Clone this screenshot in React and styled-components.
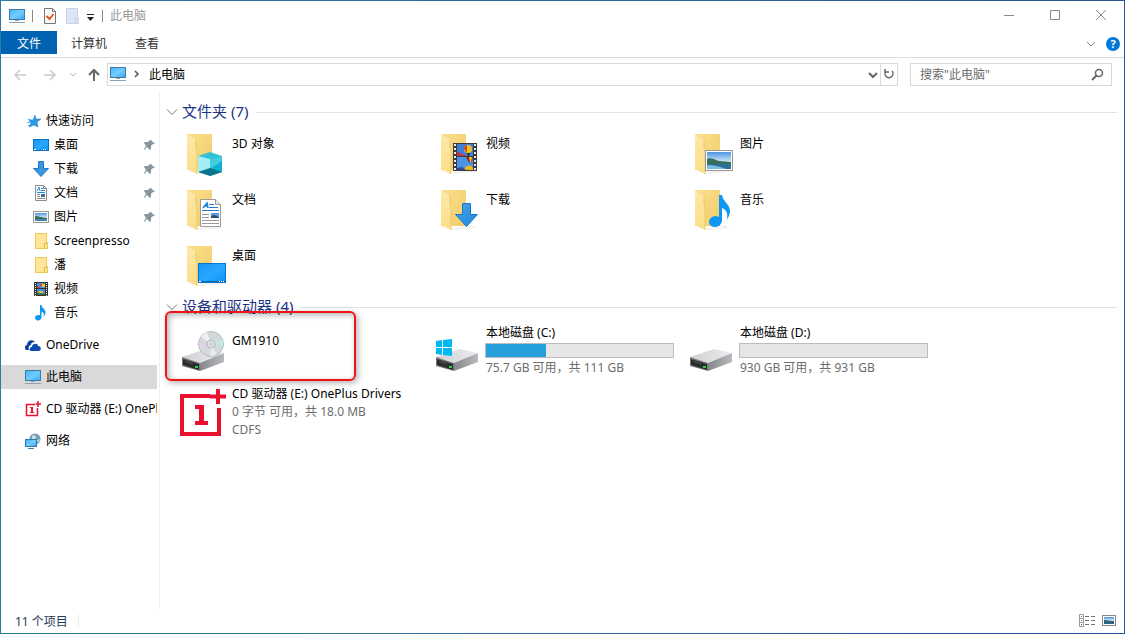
import React from "react";
import styled, { createGlobalStyle } from "styled-components";

const folders = [
  { name: "3D 对象", art: "cube" },
  { name: "视频", art: "video" },
  { name: "图片", art: "picture" },
  { name: "文档", art: "document" },
  { name: "下载", art: "download" },
  { name: "音乐", art: "music" },
  { name: "桌面", art: "desktop" },
];

const drives = [
  { name: "GM1910", art: "disc", marked: true },
  { name: "本地磁盘 (C:)", art: "system", used: 32, info: ["75.7 GB 可用，共 111 GB"] },
  { name: "本地磁盘 (D:)", art: "disk", used: 0, info: ["930 GB 可用，共 931 GB"] },
  { name: "CD 驱动器 (E:) OnePlus Drivers", art: "oneplus", info: ["0 字节 可用，共 18.0 MB", "CDFS"] },
];

const quickAccess = [
  { name: "桌面", icon: "desktop", pinned: true },
  { name: "下载", icon: "download", pinned: true },
  { name: "文档", icon: "document", pinned: true },
  { name: "图片", icon: "picture", pinned: true },
  { name: "Screenpresso", icon: "folder" },
  { name: "潘", icon: "folder" },
  { name: "视频", icon: "video" },
  { name: "音乐", icon: "music" },
];

function Gradients() {
  return (
    <HiddenSvg aria-hidden="true">
      <defs>
        <linearGradient id="screen" x1="0" y1="0" x2="1" y2="1">
          <stop offset="0" stopColor="#3fb4f7" />
          <stop offset="0.5" stopColor="#74ccff" />
          <stop offset="1" stopColor="#35a8f3" />
        </linearGradient>
        <linearGradient id="desk" x1="0" y1="0" x2="1" y2="1">
          <stop offset="0" stopColor="#1197f5" />
          <stop offset="0.5" stopColor="#2aa7ff" />
          <stop offset="1" stopColor="#0a94f5" />
        </linearGradient>
        <linearGradient id="back" x1="0" y1="0" x2="1" y2="1">
          <stop offset="0" stopColor="#fbdf8b" />
          <stop offset="1" stopColor="#f0cd6c" />
        </linearGradient>
        <linearGradient id="flap" x1="0" y1="0" x2="0" y2="1">
          <stop offset="0" stopColor="#fde9ab" />
          <stop offset="1" stopColor="#fbdd86" />
        </linearGradient>
        <linearGradient id="metal" x1="0" y1="0" x2="1" y2="0">
          <stop offset="0" stopColor="#d0d1d4" />
          <stop offset="1" stopColor="#ececee" />
        </linearGradient>
        <linearGradient id="side" x1="0" y1="0" x2="1" y2="0">
          <stop offset="0" stopColor="#85868a" />
          <stop offset="1" stopColor="#b9babd" />
        </linearGradient>
        <linearGradient id="sky" x1="0" y1="0" x2="0" y2="1">
          <stop offset="0" stopColor="#4c94e0" />
          <stop offset="1" stopColor="#e4f3fc" />
        </linearGradient>
        <linearGradient id="arrow" x1="0" y1="0" x2="1" y2="1">
          <stop offset="0" stopColor="#4aa3e8" />
          <stop offset="1" stopColor="#1f86dc" />
        </linearGradient>
      </defs>
    </HiddenSvg>
  );
}

function Cube() {
  return (
    <g>
      <path d="M31 23l12 4-12 4-12-4z" fill="#35bfd2" />
      <path d="M19 27l12 3v17l-12-4z" fill="#a4edf4" />
      <path d="M43 27l-12 3v17l12-4z" fill="#0cb0d2" />
      <path d="M31 30l12-3v5l-12 8z" fill="#3fcbe0" />
      <path d="M19 43l12-4 12 4-12 4z" fill="#08778c" />
    </g>
  );
}

function Balloons() {
  return (
    <g>
      <rect x="20" y="14" width="24" height="28" fill="#3b3b3b" />
      <rect x="24" y="15" width="16" height="12" fill="#3f7ed6" />
      <rect x="24" y="28" width="16" height="13" fill="#4a93e8" />
      <path d="M24 22l5 3 5 2H24z" fill="#c8324a" />
      <ellipse cx="35" cy="20" rx="4" ry="4" fill="#f0c419" />
      <path d="M31 20a4 4 0 0 1 3-4v8z" fill="#d6402f" />
      <path d="M34 24h3l-1 3h-1z" fill="#3a2b16" />
      <path d="M33 28h7l-1 4-2 2-2-2z" fill="#8b2636" />
      <path d="M36 28h3l-1 5h-1z" fill="#f3c623" />
      <path d="M31 41c1-5 7-6 9-2v2z" fill="#eeb91b" />
      <path d="M24 39l5-1 4 3h-9z" fill="#2d4b93" />
      <path d="M22 15v27M42 15v27" stroke="#eee" strokeWidth="2" strokeDasharray="2 2" />
    </g>
  );
}

function Landscape() {
  return (
    <g>
      <rect x="18.5" y="21.5" width="27" height="20" fill="#fff" stroke="#999" />
      <rect x="20" y="23" width="24" height="11" fill="url(#sky)" />
      <path d="M20 30c4-2 8 1 12 2l12 1v3H20z" fill="#37705a" />
      <path d="M20 35h24v5H20z" fill="#2d6f9c" />
      <path d="M20 36c7 0 14 2 19 4H20z" fill="#7ebfdd" />
    </g>
  );
}

function Page() {
  return (
    <g>
      <path d="M21.5 14.5h15l5 5v22h-20z" fill="#fff" stroke="#9a9a9a" />
      <path d="M36.5 14.5v5h5" fill="#e8e8e8" stroke="#9a9a9a" />
      <path d="M24 23l4-5 1 5M26 21h3" stroke="#1b7fd4" strokeWidth="1.5" fill="none" />
      <path d="M30 19.5h5M30 22.5h9M23 25.5h17" stroke="#1b7fd4" />
      <path d="M23 29.5h7M23 32.5h7M23 35.5h17M23 38.5h17" stroke="#9a9a9a" />
      <rect x="32" y="28" width="8" height="5" fill="#5b9bd8" />
      <path d="M32 33v-2l3-1 5 2v1z" fill="#24506e" />
    </g>
  );
}

function Screen() {
  return (
    <g>
      <rect x="19.5" y="22.5" width="27" height="19" fill="url(#desk)" stroke="#0b74cc" />
      <path d="M20 40.5h26" stroke="#0868b5" />
      <path d="M20 40.5h2M40 40.5h1M42 40.5h1M44 40.5h1" stroke="#fff" />
    </g>
  );
}

function Note() {
  return (
    <path
      d="M32 10h3c1 7 8 9 8 16 0 4-2 6-3 9 1-6 0-10-5-12v12c0 4-3 7-7 7-3 0-6-2-6-5s3-6 7-6l3 1z"
      fill="#0c97f3"
    />
  );
}

const folderArt = {
  cube: <Cube />,
  video: <Balloons />,
  picture: <Landscape />,
  document: <Page />,
  download: <path d="M29.5 18.5h8v11h7L33.5 41.5 22.5 29.5h7z" fill="url(#arrow)" stroke="#1b77c4" />,
  music: <Note />,
  desktop: <Screen />,
};

function FolderIcon({ art }) {
  return (
    <svg width="48" height="48" aria-hidden="true">
      <path d="M17 44l5 1 22-2-6-3z" fill="#f2f2f2" />
      <path d="M8 5h25v36H8z" fill="url(#back)" />
      <path d="M8 5l9 6v9l1 1v24L8 40z" fill="url(#flap)" />
      <path d="M17 11v9l1 1v24" stroke="#ecc867" fill="none" />
      {folderArt[art]}
    </svg>
  );
}

function DriveBody() {
  return (
    <g>
      <path d="M3 30l24-8 18 4-24 10z" fill="url(#metal)" />
      <path d="M21 36l24-10v9L21 44z" fill="url(#side)" />
      <path d="M3 30l18 6v8L3 39z" fill="#77787a" />
      <path d="M4 32l16 5v6L4 38z" fill="#2b2c2e" />
      <path d="M6 34l8 3" stroke="#565759" />
      <path d="M16 39h3v2h-3z" fill="#27d43c" />
    </g>
  );
}

function DriveIcon({ art }) {
  if (art === "oneplus") {
    return (
      <svg width="48" height="48" aria-hidden="true">
        <path d="M31 7H3v38h37V19" stroke="#eb1230" strokeWidth="4" fill="none" />
        <path d="M39 0v15M31 7.5h16" stroke="#eb1230" strokeWidth="4" />
        <path d="M16 16h9v16h4v4H16v-4h4V20h-4z" fill="#eb1230" />
      </svg>
    );
  }
  return (
    <svg width="48" height="48" aria-hidden="true">
      <DriveBody />
      {art === "disc" && (
        <g>
          <circle cx="32" cy="17" r="12.5" fill="#d3d8da" stroke="#b6babd" />
          <path d="M32 17L22 10a12 12 0 0 1 6-5z" fill="#eef0f1" />
          <path d="M32 17l12-4a12 12 0 0 1 0 6z" fill="#c3ecdd" />
          <path d="M32 17l-12-2a12 12 0 0 0 1 6z" fill="#e3d3ea" />
          <path d="M32 17l6 10a12 12 0 0 1-7 2z" fill="#e9ebec" />
          <circle cx="32" cy="17" r="4" fill="#e9ecee" stroke="#aeb3b6" />
          <circle cx="32" cy="17" r="1.5" fill="#fff" stroke="#aeb3b6" />
        </g>
      )}
      {art === "system" && (
        <path
          d="M3 14l6-1v7H3zM10 13l9-1v8h-9zM3 21h6v7l-6-1zM10 21h9v8l-9-1z"
          fill="#00b9f1"
        />
      )}
    </svg>
  );
}

const smallArt = {
  star: (
    <g>
      <path d="M10 2l1 4h5l-4 3 1 5-4-2-5 2 2-4-2-3h4z" fill="#2b9be6" stroke="#1977c2" strokeWidth="0.5" />
      <path d="M3 6.5h3M2 9.5h4M3 12.5h2" stroke="#53b5f2" />
    </g>
  ),
  desktop: (
    <g>
      <rect x="0.5" y="2.5" width="15" height="11" fill="url(#desk)" stroke="#0b6fc0" />
      <path d="M1 12.5h2M10 12.5h1M12 12.5h1" stroke="#fff" />
    </g>
  ),
  download: <path d="M5.5 0.5h5v7h5L8 15.5 0.5 7.5h5z" fill="#3b96e2" stroke="#2277c6" />,
  document: (
    <g>
      <path d="M2.5 0.5h8l3 3v12h-11z" fill="#fff" stroke="#8c8c8c" />
      <path d="M10.5 0.5v3h3" fill="none" stroke="#8c8c8c" />
      <path d="M4 6l2-4 1 4M8 3.5h2M8 5.5h4M4 7.5h8" stroke="#2289d8" fill="none" />
      <path d="M4 9.5h3M4 11.5h3M4 13.5h8" stroke="#8c8c8c" />
      <rect x="8" y="9" width="4" height="3" fill="#3a6f9c" />
    </g>
  ),
  picture: (
    <g>
      <rect x="0.5" y="2.5" width="15" height="11" fill="#fff" stroke="#999" />
      <rect x="2" y="4" width="12" height="5" fill="url(#sky)" />
      <path d="M2 7c3 0 5 1 12 2v1H2z" fill="#37705a" />
      <path d="M2 10h12v2H2z" fill="#4587ac" />
    </g>
  ),
  folder: (
    <g>
      <path d="M2.5 0.5h11v9h1v6h-12z" fill="#ffe596" stroke="#eac65d" />
      <path d="M11.5 15.5v-5h2v-2" stroke="#e0b94a" fill="none" />
    </g>
  ),
  video: (
    <g>
      <rect x="1" y="1" width="14" height="14" fill="#333" />
      <path d="M4 2h8v5H4zM4 8h8v6H4z" fill="#4b8de0" />
      <path d="M4 5l4 2H4zM7 3h3v2H7z" fill="#d5432c" />
      <path d="M9 3h3v3H9zM6 10h4v2H6z" fill="#f3c422" />
      <path d="M4 12h4l4 1v1H4z" fill="#3c7038" />
      <path d="M2.5 2v13M13.5 2v13" stroke="#eee" strokeDasharray="1 1" />
    </g>
  ),
  music: (
    <path
      d="M7 0h1.5c0 3 4 4 4 7.5 0 2-1 3-2 4.5 1-3 0-5-2-5.5V12c0 2-1.5 3.5-3.5 3.5S2 14 2 12.500 3.500 10 5.500 10H7z"
      fill="#0c97f3"
    />
  ),
  cloud: (
    <g>
      <path d="M1 13c-2-2-1-5 1-5 0-4 4-6 7-4l1 1c-3 0-4 1-4 3-2 0-3 3-2 5z" fill="#0a3f9c" />
      <path d="M6 14c-2 0-2-4 1-4 0-4 6-4 6-1 3 0 4 4 1 5z" fill="#0c4cb0" />
    </g>
  ),
  computer: (
    <g>
      <rect x="0.5" y="1.5" width="15" height="10" fill="url(#screen)" stroke="#3f7ca5" />
      <path d="M6 12.5h4" stroke="#8ba3b3" />
      <path d="M0 14.5h16" stroke="#8ba3b3" />
    </g>
  ),
  oneplus: (
    <g>
      <path d="M10 3.5H1.500v11h11V7" stroke="#eb1230" strokeWidth="1.5" fill="none" />
      <path d="M13 0v6M10.500 3h5.500" stroke="#eb1230" strokeWidth="1.5" />
      <path d="M5 6h3v5h1v1H5v-1h1V7H5z" fill="#eb1230" />
    </g>
  ),
  network: (
    <g>
      <circle cx="10" cy="6" r="5.5" fill="#6f9fb8" />
      <path d="M7 3c2-2 5 0 4 2s-3 1-4 3zM12 7l3-1-2 4z" fill="#c9dfe8" />
      <rect x="0.5" y="6.5" width="11" height="7" fill="url(#screen)" stroke="#2f78ab" />
      <path d="M3 15.5h6" stroke="#3f7ca5" />
    </g>
  ),
  pin: <path d="M10 3l4 4-2 0-2 2 0 3-1 1-3-3-3 3 0-1 2-3-2-3 1-1 3 0 2-2z" fill="#8a959d" />,
};

function SmallIcon({ name }) {
  return (
    <svg width="16" height="16" aria-hidden="true">
      {smallArt[name]}
    </svg>
  );
}

function Line({ d, w = 16, h = 16, color = "#777", weight = 1 }) {
  return (
    <svg width={w} height={h} fill="none" stroke={color} strokeWidth={weight} aria-hidden="true">
      <path d={d} />
    </svg>
  );
}

function Group({ title, children }) {
  return (
    <section>
      <GroupHeader>
        <GroupButton>
          <Line d="M1 4.5l5 5 5-5" w="12" h="12" />
          {title}
        </GroupButton>
        <Rule />
      </GroupHeader>
      {children}
    </section>
  );
}

function App() {
  return (
    <Frame>
      <GlobalStyle />
      <Gradients />
      <Window>
        <TitleBar>
          <SmallIcon name="computer" />
          <Divider />
          <QuickButton aria-label="属性">
            <svg width="16" height="16">
              <path d="M0.5 0.5h8l3 3v12h-11z" fill="#fafafa" stroke="#777" />
              <path d="M8.5 0.5v3h3" fill="none" stroke="#777" />
              <path d="M2.5 8l3 3 4-5" stroke="#e8541e" strokeWidth="2" fill="none" />
            </svg>
          </QuickButton>
          <QuickButton aria-label="新建文件夹">
            <svg width="16" height="16">
              <path d="M2.5 0.5h11v10h1v5h-12z" fill="#dbe5f5" stroke="#c5d2e8" />
              <path d="M11.5 15.5v-5h2" fill="none" stroke="#c5d2e8" />
            </svg>
          </QuickButton>
          <QuickButton aria-label="自定义快速访问工具栏">
            <svg width="11" height="16">
              <path d="M3 6h7v1H3zM3 9h7l-3.5 4z" fill="#222" />
            </svg>
          </QuickButton>
          <Divider />
          <Caption>此电脑</Caption>
          <WindowButton aria-label="最小化">
            <Line d="M1 7.5h10" w="12" color="#888" />
          </WindowButton>
          <WindowButton aria-label="最大化">
            <Line d="M1.5 2.5h9v9h-9z" w="12" color="#888" />
          </WindowButton>
          <WindowButton aria-label="关闭">
            <Line d="M1 2l10 10M11 2L1 12" w="12" color="#888" />
          </WindowButton>
        </TitleBar>

        <Ribbon>
          <Tab $file>文件</Tab>
          <Tab>计算机</Tab>
          <Tab>查看</Tab>
          <RibbonTools>
            <PlainButton aria-label="展开功能区">
              <Line d="M1 4l4 4 4-4" w="10" h="12" color="#888" />
            </PlainButton>
            <Help aria-label="帮助">?</Help>
          </RibbonTools>
        </Ribbon>

        <NavRow>
          <NavButton aria-label="后退">
            <Line d="M14 9H3M8 4L3 9l5 5" color="#ccc" weight="1.5" />
          </NavButton>
          <NavButton aria-label="前进">
            <Line d="M2 9h11M8 4l5 5-5 5" color="#ccc" weight="1.5" />
          </NavButton>
          <NavButton aria-label="最近浏览的位置" $narrow>
            <Line d="M1 7l3 3 3-3" w="8" color="#bbb" />
          </NavButton>
          <NavButton aria-label="上移" $up>
            <Line d="M8 15V4M3 9l5-5 5 5" color="#666" weight="2" />
          </NavButton>
          <AddressBox>
            <SmallIcon name="computer" />
            <PlainButton aria-label="路径">
              <Line d="M2 5l3 3-3 3" w="8" color="#555" weight="1.5" />
            </PlainButton>
            <Crumb href="#computer">此电脑</Crumb>
            <PlainButton aria-label="以前的位置">
              <Line d="M5 7l4 4 4-4" color="#666" weight="2" />
            </PlainButton>
            <Refresh aria-label="刷新">
              <Line d="M3 3v3h4M10 5a4 4 0 1 1-6 0L3 6" w="14" color="#666" weight="1.5" />
            </Refresh>
          </AddressBox>
          <SearchBox>
            <SearchInput type="text" aria-label="搜索" placeholder={'搜索"此电脑"'} />
            <svg width="16" height="16" fill="none" stroke="#666" strokeWidth="1.5" aria-hidden="true">
              <circle cx="10" cy="7" r="3.5" />
              <path d="M7.5 9.5L3 14" strokeWidth="2" />
            </svg>
          </SearchBox>
        </NavRow>

        <Body>
          <Sidebar>
            <SideItem href="#quick">
              <SmallIcon name="star" />
              <SideName>快速访问</SideName>
            </SideItem>
            {quickAccess.map((item) => (
              <SideItem key={item.name} href={"#" + item.icon} $child>
                <SmallIcon name={item.icon} />
                <SideName>{item.name}</SideName>
                {item.pinned && <SmallIcon name="pin" />}
              </SideItem>
            ))}
            <SideItem href="#onedrive" $apart>
              <SmallIcon name="cloud" />
              <SideName>OneDrive</SideName>
            </SideItem>
            <SideItem href="#computer" $apart $active>
              <SmallIcon name="computer" />
              <SideName>此电脑</SideName>
            </SideItem>
            <SideItem href="#cd" $apart>
              <SmallIcon name="oneplus" />
              <SideName>CD 驱动器 (E:) OnePlus Drivers</SideName>
            </SideItem>
            <SideItem href="#network" $apart>
              <SmallIcon name="network" />
              <SideName>网络</SideName>
            </SideItem>
          </Sidebar>

          <Main>
            <Group title="文件夹 (7)">
              <Tiles>
                {folders.map((f) => (
                  <Tile key={f.name} href={"#" + f.art}>
                    <FolderIcon art={f.art} />
                    <TileText>
                      <TileLine>{f.name}</TileLine>
                    </TileText>
                  </Tile>
                ))}
              </Tiles>
            </Group>
            <Group title="设备和驱动器 (4)">
              <Tiles>
                {drives.map((d) => (
                  <Tile key={d.name} href={"#" + d.art} $tall>
                    <DriveIcon art={d.art} />
                    <TileText $tall>
                      <TileLine>{d.name}</TileLine>
                      {d.used !== undefined && (
                        <Usage>
                          <UsageFill style={{ width: d.used + "%" }} />
                        </Usage>
                      )}
                      {d.info?.map((line) => (
                        <TileLine key={line} $dim>
                          {line}
                        </TileLine>
                      ))}
                    </TileText>
                    {d.marked && <Highlight />}
                  </Tile>
                ))}
              </Tiles>
            </Group>
          </Main>
        </Body>

        <StatusBar>
          <Count>11 个项目</Count>
          <ViewButtons>
            <PlainButton aria-label="详细信息">
              <svg width="16" height="16">
                <path d="M0.5 1.5h4v4h-4zM0.5 5.5h4v4h-4zM0.5 9.5h4v4h-4z" fill="#fff" stroke="#999" />
                <path d="M6 3.5h4M12 3.5h4M6 7.5h4M12 7.5h4M6 11.5h4M12 11.5h4" stroke="#777" />
                <path d="M2 3h1v1H2z" fill="#555" />
                <path d="M2 7h1v1H2z" fill="#2a7ad0" />
                <path d="M2 11h1v1H2z" fill="#d02a2a" />
              </svg>
            </PlainButton>
            <PlainButton aria-label="大缩略图">
              <svg width="14" height="16">
                <rect x="0.5" y="2.5" width="13" height="10" fill="#fff" stroke="#888" />
                <path d="M2 4h10v4H2z" fill="url(#sky)" />
                <path d="M2 7c3 0 5 1 10 1v3H2z" fill="#2d6480" />
              </svg>
            </PlainButton>
          </ViewButtons>
        </StatusBar>
      </Window>
    </Frame>
  );
}

export default App;

const GlobalStyle = createGlobalStyle`
  * {
    box-sizing: border-box;
  }
  body {
    margin: 0;
    font: 12px/18px "Noto Sans", "Noto Sans CJK SC", sans-serif;
    color: #000;
  }
  button, input {
    font: inherit;
    color: inherit;
    border: 0;
    padding: 0;
    background: none;
  }
  a {
    color: inherit;
    text-decoration: none;
  }
  svg {
    display: block;
    flex: none;
  }
`;

const HiddenSvg = styled.svg`
  position: absolute;
  width: 0;
  height: 0;
`;

const Frame = styled.div`
  min-height: 100vh;
  display: flex;
  padding: 1px;
  background: linear-gradient(to right, #2b7ba5, #2a5596);
`;

const Window = styled.div`
  flex: 1;
  min-width: 0;
  display: flex;
  flex-direction: column;
  background: #fff;
`;

const TitleBar = styled.header`
  display: flex;
  align-items: center;
  height: 30px;
  padding-left: 8px;
`;

const Divider = styled.span`
  width: 1px;
  height: 12px;
  margin: 0 7px;
  background: #888;
`;

const QuickButton = styled.button`
  display: flex;
  margin-left: 4px;
`;

const Caption = styled.span`
  flex: 1;
  color: #999;
`;

const WindowButton = styled.button`
  width: 46px;
  height: 30px;
  display: flex;
  align-items: center;
  justify-content: center;
`;

const Ribbon = styled.div`
  display: flex;
  height: 27px;
  border-bottom: 1px solid #dadbdc;
`;

const Tab = styled.button`
  height: 23px;
  padding: 2px ${({ $file }) => ($file ? "16px" : "14px")} 0;
  color: ${({ $file }) => ($file ? "#fff" : "#333")};
  background: ${({ $file }) => ($file ? "#0063b1" : "transparent")};
`;

const RibbonTools = styled.div`
  display: flex;
  align-items: center;
  gap: 10px;
  margin-left: auto;
  padding-right: 4px;
`;

const PlainButton = styled.button`
  display: flex;
`;

const Help = styled.button`
  width: 14px;
  height: 14px;
  border-radius: 50%;
  background: #0078d7;
  color: #fff;
  font-weight: bold;
  font-size: 11px;
  line-height: 14px;
`;

const NavRow = styled.div`
  display: flex;
  align-items: center;
  height: 34px;
  padding: 0 12px 2px 4px;
`;

const NavButton = styled.button`
  display: flex;
  justify-content: center;
  width: ${({ $narrow, $up }) => ($narrow ? "16px" : $up ? "26px" : "30px")};
`;

const AddressBox = styled.div`
  flex: 1;
  display: flex;
  align-items: center;
  height: 23px;
  border: 1px solid #d9d9d9;
  padding-left: 2px;
  gap: 7px;
`;

const Crumb = styled.a`
  flex: 1;
  padding: 1px 0 0 1px;
`;

const Refresh = styled.button`
  display: flex;
  align-items: center;
  justify-content: center;
  width: 17px;
  height: 21px;
  margin-left: -7px;
  border-left: 1px solid #d9d9d9;
`;

const SearchBox = styled.label`
  display: flex;
  align-items: center;
  width: 202px;
  height: 23px;
  margin-left: 12px;
  padding: 0 6px 0 9px;
  border: 1px solid #d9d9d9;
`;

const SearchInput = styled.input`
  flex: 1;
  min-width: 0;
  padding-top: 2px;
  outline: 0;
  &::placeholder {
    color: #6d6d6d;
    opacity: 1;
  }
`;

const Body = styled.div`
  flex: 1;
  display: flex;
`;

const Sidebar = styled.nav`
  width: 159px;
  flex: none;
  padding: 17px 2px 0 0;
  border-right: 1px solid #f0f0f0;
`;

const SideItem = styled.a`
  display: flex;
  align-items: center;
  gap: 5px;
  height: 24px;
  margin-top: ${({ $apart }) => ($apart ? "8px" : "0")};
  padding-left: ${({ $child }) => ($child ? "32px" : "24px")};
  background: ${({ $active }) => ($active ? "#d9d9d9" : "transparent")};
`;

const SideName = styled.span`
  flex: 1;
  min-width: 0;
  overflow: hidden;
  white-space: nowrap;
`;

const Main = styled.main`
  flex: 1;
  padding: 6px 7px 0 6px;
`;

const GroupHeader = styled.h2`
  display: flex;
  align-items: center;
  gap: 8px;
  height: 27px;
  margin: 0;
  font-size: 15px;
  font-weight: normal;
`;

const GroupButton = styled.button`
  display: flex;
  align-items: center;
  gap: 4px;
  padding-bottom: 2px;
  color: #1e3287;
`;

const Rule = styled.span`
  flex: 1;
  height: 1px;
  margin-top: 2px;
  background: #e2e2e2;
`;

const Tiles = styled.div`
  display: grid;
  grid-template-columns: repeat(auto-fill, 254px);
  padding-left: 13px;
`;

const Tile = styled.a`
  position: relative;
  display: flex;
  align-items: center;
  gap: 4px;
  height: ${({ $tall }) => ($tall ? "62px" : "56px")};
  padding-right: 13px;
`;

const TileText = styled.div`
  flex: 1;
  min-height: ${({ $tall }) => ($tall ? "38px" : "36px")};
  padding-bottom: ${({ $tall }) => ($tall ? "2px" : "0")};
  white-space: nowrap;
`;

const TileLine = styled.div`
  padding-left: 1px;
  color: ${({ $dim }) => ($dim ? "#6d6d6d" : "#000")};
`;

const Usage = styled.div`
  height: 15px;
  margin: 1px 0;
  border: 1px solid #bcbcbc;
  background: #e6e6e6;
`;

const UsageFill = styled.div`
  height: 100%;
  background: #26a0da;
`;

// red marker drawn round the phone's tile
const Highlight = styled.div`
  position: absolute;
  top: -9px;
  left: -14px;
  width: 191px;
  height: 70px;
  border: 2px solid #f01414;
  border-radius: 6px;
  box-shadow: 2px 2px 6px rgba(0, 0, 0, 0.3), inset 2px 2px 6px rgba(0, 0, 0, 0.3);
`;

const StatusBar = styled.footer`
  display: flex;
  align-items: center;
  justify-content: space-between;
  height: 24px;
  padding: 0 8px 0 14px;
`;

const Count = styled.span`
  padding: 2px 10px 0 0;
  color: #1e395b;
  line-height: 12px;
  border-right: 1px solid #eee;
`;

const ViewButtons = styled.div`
  display: flex;
  gap: 7px;
`;
